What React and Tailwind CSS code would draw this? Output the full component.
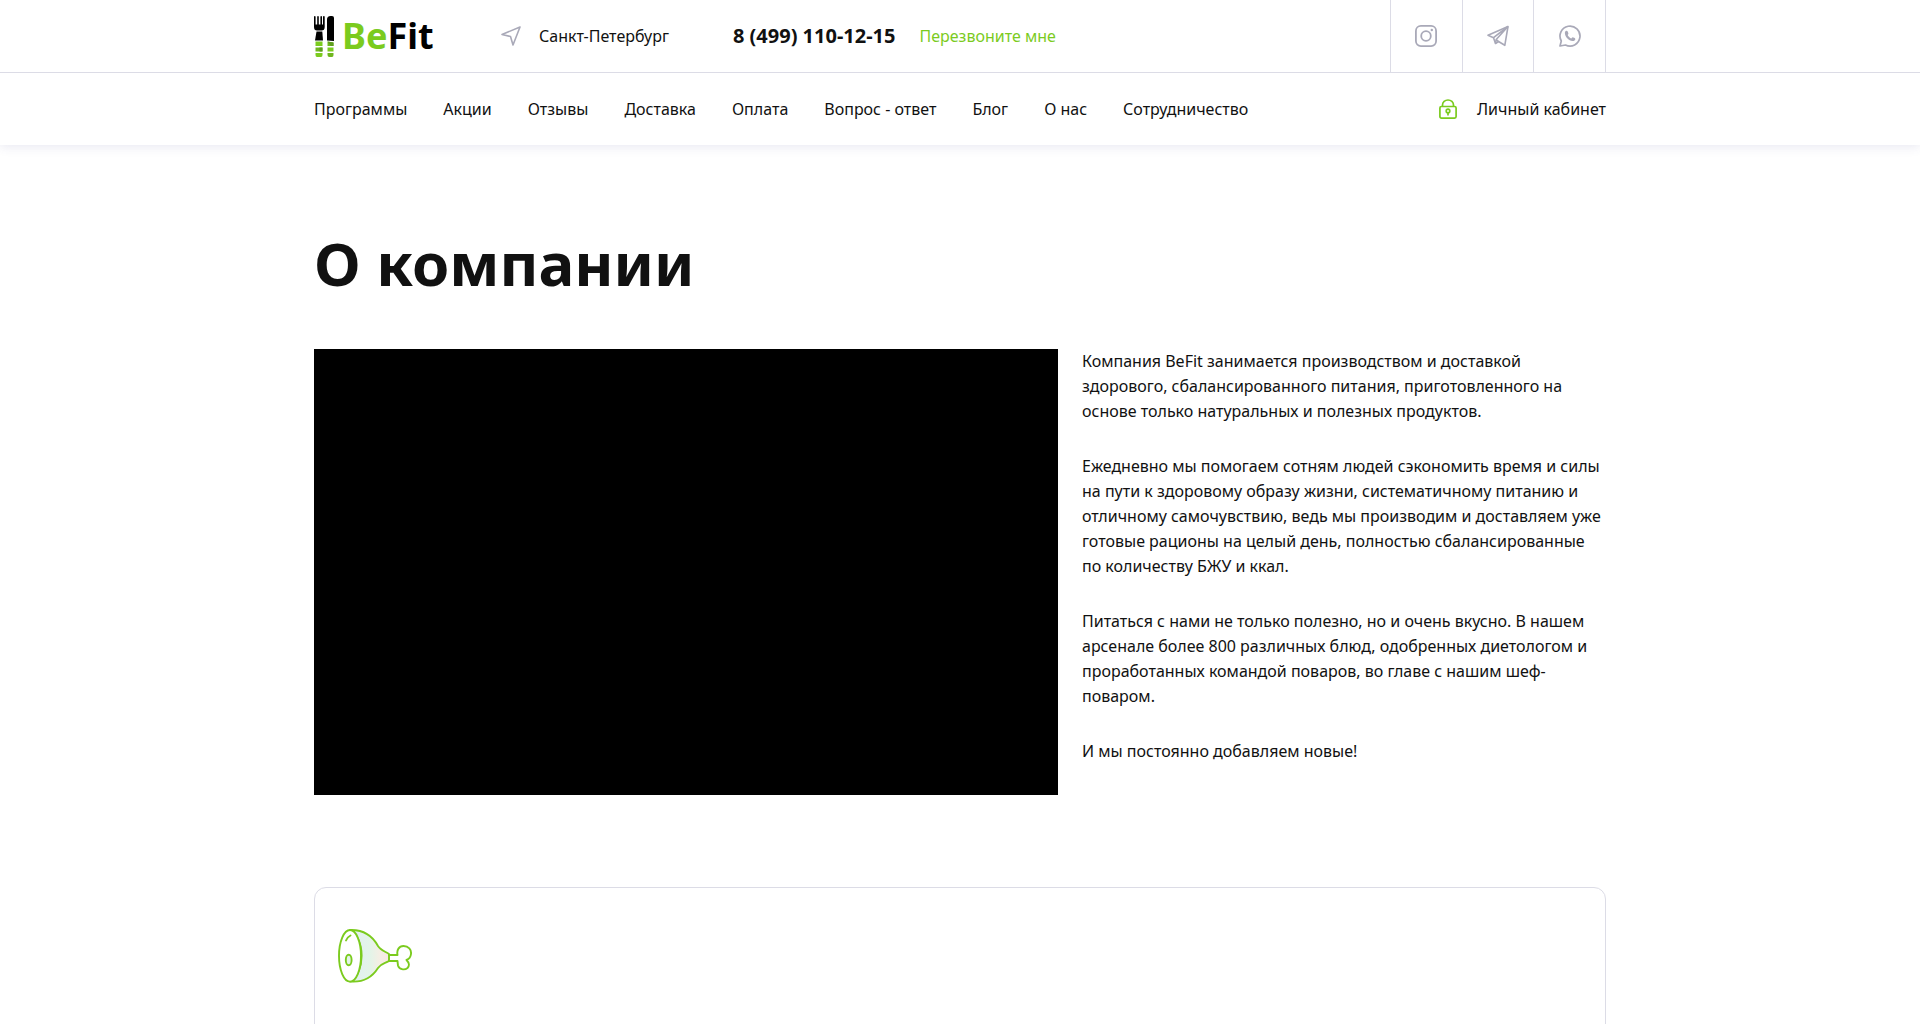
const navLinks = [
  "Программы",
  "Акции",
  "Отзывы",
  "Доставка",
  "Оплата",
  "Вопрос - ответ",
  "Блог",
  "О нас",
  "Сотрудничество",
];

function Logo() {
  return (
    <a href="#" aria-label="BeFit" className="flex h-[42px] w-[122px] items-center">
      <svg width="20" height="42" viewBox="0 -1 20 42" className="shrink-0" aria-hidden="true">
        <path
          d="M0 1Q0 0 0.800 0T1.600 1V8.500H3.200V1Q3.200 0 4 0T4.800 1V8.500H6.400V1Q6.400 0 7.200 0T8 1V8.500H9V1Q9 0 9.900 0T10.700 1V11Q10.700 14.500 7.500 14.500H3Q0 14.500 0 11Z"
          fill="#000"
        />
        <path d="M2.500 15.500H8.300L9 24.500H1Z" fill="#000" />
        <path d="M13 3.500Q13 0 16.500 0H18Q20 0 20 2V25L13 24.500Z" fill="#000" />
        <path d="M1.500 25.500H8.500V30H1.500ZM1.500 37H8.500V39Q8.500 41 7 41H3Q1.500 41 1.500 39Z" fill="#7bcb1e" />
        <path d="M1.500 31.500H8.500V35.500H1.500Z" fill="#6fb61e" />
        <path d="M5.500 31.500H8.500V35.500H5.500Z" fill="#5f9e1e" />
        <path d="M13.500 25.500L19.500 26.500V30H13.500ZM13.500 37H19.500V39Q19.500 41 18 41H15.500Q13.500 41 13.500 39Z" fill="#6fb61e" />
        <path d="M13.500 25.500L19.500 26.500V30H17Z" fill="#5f9e1e" />
        <path d="M13.500 31.500H19.500V35.500H13.500Z" fill="#7bcb1e" />
      </svg>
      <span className="ml-2 font-['Noto_Sans'] text-[36px] leading-[42px] font-bold text-black">
        <span className="text-[#7bcb1e]">Be</span>Fit
      </span>
    </a>
  );
}

function LocationIcon() {
  return (
    <svg width="20" height="20" viewBox="0 0 20 20" fill="none" stroke="#a9a9b8" strokeWidth="1.600" strokeLinejoin="round" aria-hidden="true">
      <path d="M19 1L1 8.500L9.500 10.500L12 19Z" />
    </svg>
  );
}

function InstagramIcon() {
  return (
    <svg width="22" height="22" viewBox="0 0 22 22" fill="none" stroke="#a9a9b8" strokeWidth="1.800" aria-hidden="true">
      <rect x="0.900" y="0.900" width="20.200" height="20.200" rx="5" />
      <circle cx="11" cy="11" r="4.800" />
      <circle cx="16.800" cy="5" r="1.200" fill="#a9a9b8" stroke="none" />
    </svg>
  );
}

function TelegramIcon() {
  return (
    <svg width="22" height="22" viewBox="0 0 22 22" fill="none" stroke="#a9a9b8" strokeWidth="1.600" strokeLinejoin="round" aria-hidden="true">
      <path d="M21 1.500L1 10.300L6.500 12.700L8.500 18.500L11.500 16.500L17.800 20.300Z" />
      <path d="M21 1.500L6.500 12.700M21 1.500L9.200 14.500L8.500 18.500M9.200 14.500L11.500 16.500" />
    </svg>
  );
}

function WhatsAppIcon() {
  return (
    <svg width="22" height="22" viewBox="0 0 22 22" fill="none" stroke="#a9a9b8" strokeWidth="1.700" strokeLinejoin="round" aria-hidden="true">
      <path d="M1 21L2.300 16A10 10 0 1 1 6.500 20Z" />
      <path
        d="M7.300 5.800C6.300 6 5.700 7.200 5.900 8.500C6.400 12.300 9.800 15.700 13.500 16.100C14.900 16.200 16.300 15.300 16.300 13.900C16.300 13.100 14.300 12.200 13.700 12.200C13.100 12.200 12.700 13.400 12.200 13.400C11.200 13.300 8.900 11.100 8.700 10.100C8.600 9.500 9.500 9.100 9.400 8.400C9.300 7.700 8.600 5.600 7.300 5.800Z"
        fill="#a9a9b8"
        stroke="none"
      />
    </svg>
  );
}

function LockIcon() {
  return (
    <svg width="18" height="20" viewBox="0 0 18 20" fill="none" stroke="#7bcb1e" strokeWidth="1.700" aria-hidden="true">
      <rect x="0.900" y="7.500" width="16.200" height="11.600" rx="1.500" />
      <path d="M3.500 7.500V6A5.500 5 0 0 1 14.500 6V7.500" />
      <circle cx="9" cy="12" r="1.800" />
      <path d="M9 13.800V16.500" />
    </svg>
  );
}

function HamIcon() {
  return (
    <svg width="74" height="54" viewBox="0 0 74 54" fill="none" stroke="#7bcb1e" strokeWidth="1.900" strokeLinejoin="round" strokeLinecap="round" aria-hidden="true">
      <defs>
        <linearGradient id="ham" x1="16" y1="0" x2="51" y2="0" gradientUnits="userSpaceOnUse">
          <stop offset="0" stopColor="#e2eff1" />
          <stop offset="0.450" stopColor="#e3f4e8" />
          <stop offset="0.750" stopColor="#f5eee4" />
          <stop offset="1" stopColor="#f8e8e2" />
        </linearGradient>
      </defs>
      <path
        d="M12 1C25 0.500 34 6 40 17C42.500 21 46 22 51 25V32C47 34.500 43 34.500 40 39C33 50 23 53.500 12 52.500C28 43 27 9 12 1Z"
        fill="url(#ham)"
      />
      <ellipse cx="12" cy="26.800" rx="11" ry="25.800" fill="#fff" />
      <ellipse cx="10.700" cy="31" rx="2.900" ry="5.300" fill="#e3f4e8" />
      <path d="M8 11.500Q9.500 8 12.500 6.500" />
      <path d="M51 26H59.500C58.500 21 61 17 65.500 17C70.500 17 73.500 20.500 73 25C72.700 28 71 30 68.500 31C71.500 34 71.500 37 69.500 39C66.500 41.500 61 40.500 60 36.500Q59.700 34.500 59.500 32H51" />
    </svg>
  );
}

const socials = [
  { name: "Instagram", Icon: InstagramIcon },
  { name: "Telegram", Icon: TelegramIcon },
  { name: "WhatsApp", Icon: WhatsAppIcon },
];

export default function App() {
  return (
    <div className="h-screen overflow-hidden bg-white font-['Noto_Sans',sans-serif] text-base leading-[25px] text-[#111]">
      <header className="shadow-[0_2px_10px_rgba(70,70,150,0.120)]">
        <div className="border-b border-[#dcdce6]">
          <div className="mx-auto flex h-[72px] max-w-[1332px] items-center px-5">
            <Logo />
            <button type="button" className="ml-[65px] flex items-center gap-[18px]">
              <LocationIcon />
              <span>Санкт-Петербург</span>
            </button>
            <a href="tel:+74991101215" className="ml-16 text-xl font-bold">
              8 (499) 110-12-15
            </a>
            <button type="button" className="ml-6 text-[#7bcb1e]">
              Перезвоните мне
            </button>
            <div className="ml-auto flex h-full w-[216px] divide-x divide-[#dcdce6] border-x border-[#dcdce6]">
              {socials.map(({ name, Icon }) => (
                <a key={name} href="#" aria-label={name} className="flex flex-1 items-center justify-center">
                  <Icon />
                </a>
              ))}
            </div>
          </div>
        </div>
        <div className="mx-auto flex h-[72px] max-w-[1332px] items-center justify-between px-5">
          <nav className="flex gap-9">
            {navLinks.map((label) => (
              <a key={label} href="#">
                {label}
              </a>
            ))}
          </nav>
          <a href="#" className="flex items-center gap-5">
            <LockIcon />
            Личный кабинет
          </a>
        </div>
      </header>

      <main className="mx-auto max-w-[1332px] px-5 pt-20">
        <h1 className="text-[60px] leading-[76px] font-bold">О компании</h1>
        <section className="mt-12 grid grid-cols-[744fr_524fr] gap-6">
          <div className="h-[446px] bg-black" />
          <div className="space-y-[30px] whitespace-nowrap">
            <p>
              Компания BeFit занимается производством и доставкой <br />
              здорового, сбалансированного питания, приготовленного на <br />
              основе только натуральных и полезных продуктов.
            </p>
            <p>
              Ежедневно мы помогаем сотням людей сэкономить время и силы <br />
              на пути к здоровому образу жизни, систематичному питанию и <br />
              отличному самочувствию, ведь мы производим и доставляем уже <br />
              готовые рационы на целый день, полностью сбалансированные <br />
              по количеству БЖУ и ккал.
            </p>
            <p>
              Питаться с нами не только полезно, но и очень вкусно. В нашем <br />
              арсенале более 800 различных блюд, одобренных диетологом и <br />
              проработанных командой поваров, во главе с нашим шеф-<br />
              поваром.
            </p>
            <p>И мы постоянно добавляем новые!</p>
          </div>
        </section>
        <section className="mt-[92px] min-h-[300px] rounded-xl border border-[#dcdce6] px-[23px] py-[41px]">
          <HamIcon />
        </section>
      </main>
    </div>
  );
}
